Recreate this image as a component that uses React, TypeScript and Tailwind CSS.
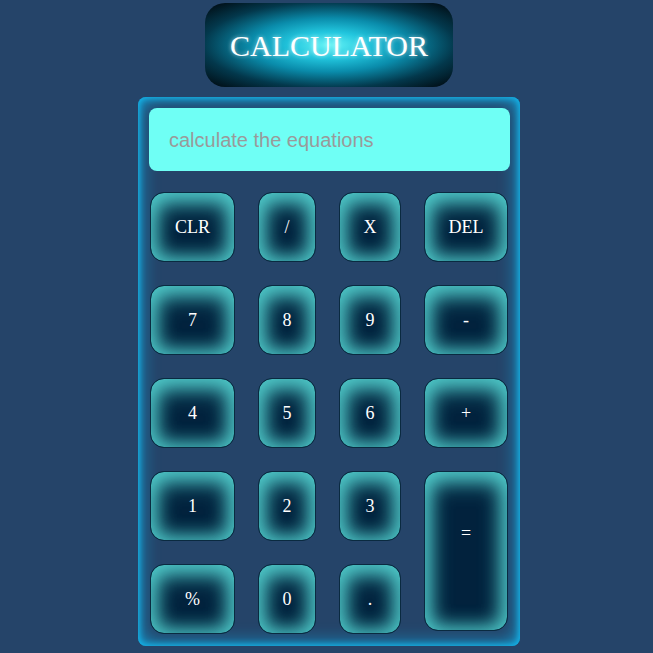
const keys: { label: string; tall?: boolean }[] = [
  { label: "CLR" },
  { label: "/" },
  { label: "X" },
  { label: "DEL" },
  { label: "7" },
  { label: "8" },
  { label: "9" },
  { label: "-" },
  { label: "4" },
  { label: "5" },
  { label: "6" },
  { label: "+" },
  { label: "1" },
  { label: "2" },
  { label: "3" },
  { label: "=", tall: true },
  { label: "%" },
  { label: "0" },
  { label: "." },
];

function Key({ label, tall }: { label: string; tall?: boolean }) {
  return (
    <button
      className={`flex justify-center rounded-[14px] border border-[#0a2a40] bg-[#02223d] text-[18px] text-white shadow-[inset_0_6px_24px_2px_#4fc8c8,inset_0_0_20px_2px_#44b9bb] [font-family:'Liberation_Serif',serif] ${
        tall
          ? "row-span-2 h-[160px] items-start self-start pt-[48px]"
          : "h-[70px] items-center"
      }`}
    >
      {label}
    </button>
  );
}

export default function App() {
  return (
    <div className="flex min-h-[653px] flex-col items-center bg-[#254469] pl-[5px] pt-[3px]">
      <div className="flex h-[84px] w-[248px] items-center justify-center rounded-[20px] bg-[radial-gradient(ellipse_at_center,#66f4f6_0%,#22c6de_22%,#0a8cab_45%,#03384c_72%,#00060c_100%)]">
        <h1 className="text-[30px] text-white [font-family:'Liberation_Serif',serif] [text-shadow:0_0_4px_rgba(255,255,255,0.6)]">
          CALCULATOR
        </h1>
      </div>

      <div className="mt-[10px] w-[382px] rounded-[8px] bg-[#254469] pb-[12px] pl-[11px] pr-[10px] pt-[11px] shadow-[inset_0_0_20px_#0fb2ea,inset_0_0_6px_1px_#1cc0f2]">
        <div className="flex h-[63px] items-center rounded-[8px] bg-[#6ffff5] px-[20px]">
          <span className="text-[20px] text-[#9a9a9a] [font-family:'Liberation_Sans',sans-serif]">
            calculate the equations
          </span>
        </div>

        <div className="mt-[21px] grid grid-cols-[85px_58px_62px_84px] gap-[23px] pl-[1px]">
          {keys.map((k) => (
            <Key key={k.label} label={k.label} tall={k.tall} />
          ))}
        </div>
      </div>
    </div>
  );
}
